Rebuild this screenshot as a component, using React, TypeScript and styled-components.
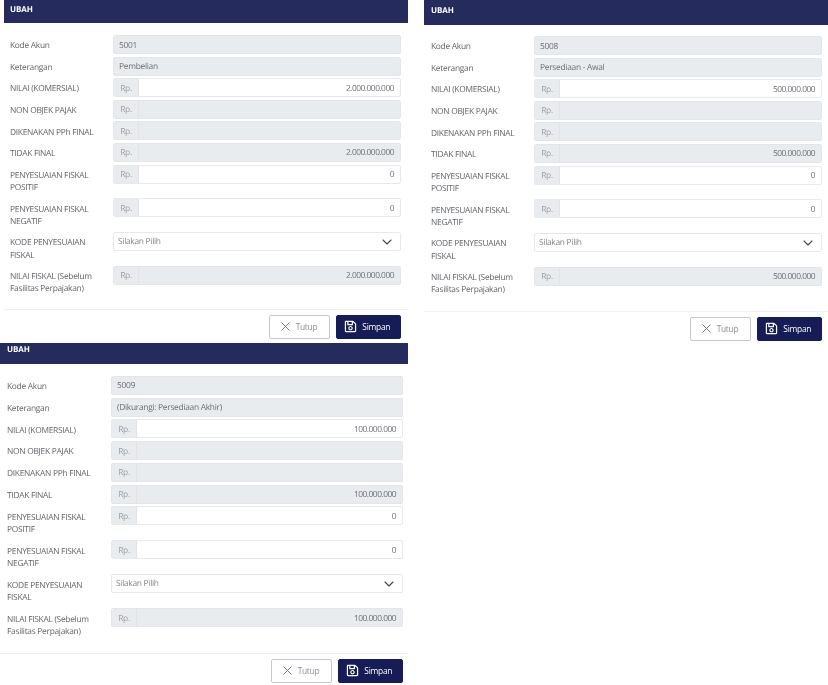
import React from 'react';
import styled, { createGlobalStyle } from 'styled-components';
import { X, ChevronDown } from 'lucide-react';
import { FaRegSave } from 'react-icons/fa';

const GlobalStyle = createGlobalStyle`
  html, body {
    margin: 0;
    padding: 0;
    background: #ffffff;
    font-family: "Open Sans", "Noto Sans", sans-serif;
    text-rendering: geometricPrecision;
  }
`;

const Page = styled.div`
  display: flex;
  width: 828px;
  height: 685px;
  overflow: hidden;
  filter: blur(0.4px);
`;

const LeftColumn = styled.div`
  width: 408px;
  display: flex;
  flex-direction: column;
  align-items: flex-end;
  margin-right: 16px;
`;

const Panel = styled.section<{ $width: number; $pad: number; $padRight: number; $fieldWidth: number }>`
  width: ${(p) => p.$width}px;
  --pad: ${(p) => p.$pad}px;
  --pad-right: ${(p) => p.$padRight}px;
  --field: ${(p) => p.$fieldWidth}px;
  --label: ${(p) => p.$width - p.$pad - p.$padRight - p.$fieldWidth}px;
`;

const Header = styled.header<{ $height: number; $textTop: number }>`
  height: ${(p) => p.$height}px;
  box-sizing: border-box;
  padding: ${(p) => p.$textTop}px var(--pad) 0;
  background: #252b5c;
  color: #ffffff;
  font-size: 8px;
  line-height: 11px;
  font-weight: 700;
  letter-spacing: -0.1px;
`;

const Body = styled.div<{ $top: number; $gap: number }>`
  display: flex;
  flex-direction: column;
  gap: ${(p) => p.$gap}px;
  padding: ${(p) => p.$top}px var(--pad-right) 0 var(--pad);
`;

const Row = styled.div<{ $tall?: boolean }>`
  display: grid;
  grid-template-columns: var(--label) var(--field);
  height: ${(p) => (p.$tall ? '31.2px' : '19px')};
`;

const Label = styled.label`
  color: #62666b;
  font-size: 8.4px;
  letter-spacing: -0.28px;
  line-height: 12.2px;
  padding-top: 5.3px;
  padding-right: 14px;
`;

const Control = styled.div<{ $disabled?: boolean }>`
  display: flex;
  align-items: center;
  height: 19px;
  box-sizing: border-box;
  border: 1px solid ${(p) => (p.$disabled ? '#e3e5e9' : '#e6e8ec')};
  border-radius: 2px;
  background: ${(p) => (p.$disabled ? '#e9ecef' : '#ffffff')};
  color: #6b6f76;
  font-size: 8.4px;
  letter-spacing: -0.28px;
`;

const PlainValue = styled.span`
  padding: 1px 0 0 5px;
`;

const Addon = styled.span`
  flex: none;
  display: flex;
  align-items: center;
  justify-content: center;
  box-sizing: border-box;
  width: 25px;
  height: 100%;
  padding-top: 1px;
  background: #e9ecef;
  border-right: 1px solid #e1e3e7;
  color: #9a9ea4;
`;

const Amount = styled.span`
  flex: 1;
  padding: 1px 6px 0 0;
  text-align: right;
  letter-spacing: -0.5px;
`;

const SelectControl = styled(Control)`
  justify-content: space-between;
  padding: 0 5px 0 4px;
  color: #80848a;
  & > svg {
    color: #44484e;
  }
`;

const Footer = styled.footer<{ $top: number }>`
  display: flex;
  justify-content: flex-end;
  gap: 6px;
  margin-top: ${(p) => p.$top}px;
  padding: 5px var(--pad-right) 4px 0;
  border-top: 1px solid #f0f1f3;
`;

const Button = styled.button<{ $primary?: boolean }>`
  display: flex;
  align-items: center;
  justify-content: center;
  gap: ${(p) => (p.$primary ? '5px' : '3px')};
  height: 24px;
  padding: 0 ${(p) => (p.$primary ? '2px' : '3px')} 1px 0;
  width: ${(p) => (p.$primary ? '65.5px' : '61px')};
  box-sizing: border-box;
  border-radius: 2px;
  border: 1px solid ${(p) => (p.$primary ? '#151c56' : '#c3c9d1')};
  background: ${(p) => (p.$primary ? '#151c56' : '#ffffff')};
  color: ${(p) => (p.$primary ? '#ffffff' : '#8a8e94')};
  font-family: inherit;
  font-size: 8.4px;
  letter-spacing: -0.25px;
  font-weight: 400;
`;

interface FormData {
  code: string;
  description: string;
  commercial: string;
}

interface LayoutProps {
  data: FormData;
  width: number;
  pad: number;
  padRight: number;
  fieldWidth: number;
  headerHeight: number;
  textTop: number;
  bodyTop: number;
  gap: number;
  footerTop: number;
}

const Money = ({ value, disabled, tall, label }: { value?: string; disabled?: boolean; tall?: boolean; label: string }) => (
  <Row $tall={tall}>
    <Label>{label}</Label>
    <Control $disabled={disabled}>
      <Addon>Rp.</Addon>
      <Amount>{value}</Amount>
    </Control>
  </Row>
);

const EditPanel = ({ data, width, pad, padRight, fieldWidth, headerHeight, textTop, bodyTop, gap, footerTop }: LayoutProps) => (
  <Panel $width={width} $pad={pad} $padRight={padRight} $fieldWidth={fieldWidth}>
    <Header $height={headerHeight} $textTop={textTop}>UBAH</Header>
    <Body $top={bodyTop} $gap={gap}>
      <Row>
        <Label>Kode Akun</Label>
        <Control $disabled><PlainValue>{data.code}</PlainValue></Control>
      </Row>
      <Row>
        <Label>Keterangan</Label>
        <Control $disabled><PlainValue>{data.description}</PlainValue></Control>
      </Row>
      <Money label="NILAI (KOMERSIAL)" value={data.commercial} />
      <Money label="NON OBJEK PAJAK" disabled />
      <Money label="DIKENAKAN PPh FINAL" disabled />
      <Money label="TIDAK FINAL" value={data.commercial} disabled />
      <Money label="PENYESUAIAN FISKAL POSITIF" value="0" tall />
      <Money label="PENYESUAIAN FISKAL NEGATIF" value="0" tall />
      <Row $tall>
        <Label>KODE PENYESUAIAN FISKAL</Label>
        <SelectControl>
          <span>Silakan Pilih</span>
          <ChevronDown size={16} strokeWidth={1.6} />
        </SelectControl>
      </Row>
      <Money label="NILAI FISKAL (Sebelum Fasilitas Perpajakan)" value={data.commercial} disabled tall />
    </Body>
    <Footer $top={footerTop}>
      <Button>
        <X size={15} strokeWidth={1.5} color="#6b6f76" />
        Tutup
      </Button>
      <Button $primary>
        <FaRegSave size={13} />
        Simpan
      </Button>
    </Footer>
  </Panel>
);

export default function App(): JSX.Element {
  return (
    <Page>
      <GlobalStyle />
      <LeftColumn>
        <EditPanel
          data={{ code: '5001', description: 'Pembelian', commercial: '2.000.000.000' }}
          width={404}
          pad={6}
          padRight={7}
          fieldWidth={288}
          headerHeight={23}
          textTop={4}
          bodyTop={12}
          gap={2.6}
          footerTop={11.8}
        />
        <EditPanel
          data={{ code: '5009', description: '(Dikurangi: Persediaan Akhir)', commercial: '100.000.000' }}
          width={408}
          pad={7}
          padRight={5}
          fieldWidth={292}
          headerHeight={21}
          textTop={1}
          bodyTop={12}
          gap={2.75}
          footerTop={13.5}
        />
      </LeftColumn>
      <EditPanel
        data={{ code: '5008', description: 'Persediaan - Awal', commercial: '500.000.000' }}
        width={404}
        pad={7}
        padRight={6}
        fieldWidth={288}
        headerHeight={25}
        textTop={4.5}
        bodyTop={11}
        gap={2.6}
        footerTop={12.8}
      />
    </Page>
  );
}
